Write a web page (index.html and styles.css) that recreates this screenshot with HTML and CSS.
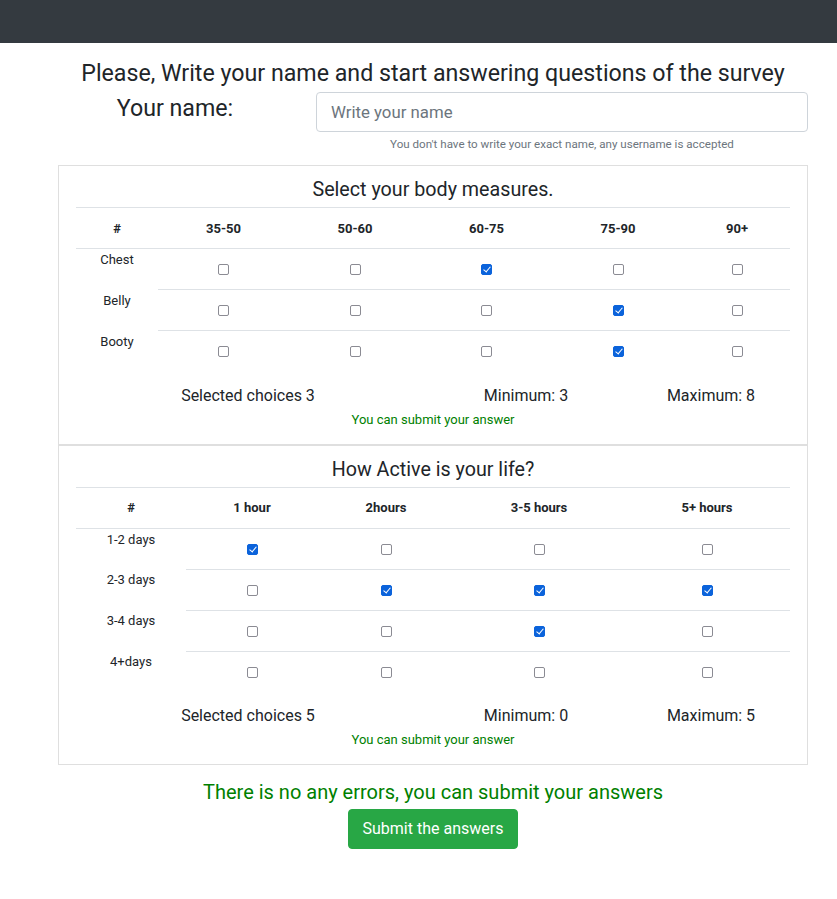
FILE: index.html
```html
<!DOCTYPE html>
<html lang="en">
<head>
<meta charset="utf-8">
<title>Survey</title>
<link rel="stylesheet" href="styles.css">
</head>
<body>
<nav class="navbar"></nav>
<main class="container">
  <h4 class="page-title">Please, Write your name and start answering questions of the survey</h4>
  <div class="name-row">
    <h4 class="name-label">Your name:</h4>
    <div class="name-field">
      <input class="form-control" type="text" placeholder="Write your name">
      <small class="hint">You don't have to write your exact name, any username is accepted</small>
    </div>
  </div>

  <section class="card">
    <h5 class="card-title">Select your body measures.</h5>
    <table class="grid-table">
      <colgroup><col style="width:82px"><col style="width:131px"><col style="width:132px"><col style="width:131px"><col style="width:132px"><col style="width:106px"></colgroup>
      <thead>
        <tr><th>#</th><th>35-50</th><th>50-60</th><th>60-75</th><th>75-90</th><th>90+</th></tr>
      </thead>
      <tbody>
        <tr><th class="row-label">Chest</th><td><input type="checkbox"></td><td><input type="checkbox"></td><td><input type="checkbox" checked></td><td><input type="checkbox"></td><td><input type="checkbox"></td></tr>
        <tr><th class="row-label">Belly</th><td><input type="checkbox"></td><td><input type="checkbox"></td><td><input type="checkbox"></td><td><input type="checkbox" checked></td><td><input type="checkbox"></td></tr>
        <tr><th class="row-label">Booty</th><td><input type="checkbox"></td><td><input type="checkbox"></td><td><input type="checkbox"></td><td><input type="checkbox" checked></td><td><input type="checkbox"></td></tr>
      </tbody>
    </table>
    <div class="stats">
      <span>Selected choices 3</span>
      <span>Minimum: 3</span>
      <span>Maximum: 8</span>
    </div>
    <p class="ok-small">You can submit your answer</p>
  </section>

  <section class="card">
    <h5 class="card-title">How Active is your life?</h5>
    <table class="grid-table">
      <colgroup><col style="width:110px"><col style="width:132px"><col style="width:136px"><col style="width:170px"><col style="width:166px"></colgroup>
      <thead>
        <tr><th>#</th><th>1 hour</th><th>2hours</th><th>3-5 hours</th><th>5+ hours</th></tr>
      </thead>
      <tbody>
        <tr><th class="row-label">1-2 days</th><td><input type="checkbox" checked></td><td><input type="checkbox"></td><td><input type="checkbox"></td><td><input type="checkbox"></td></tr>
        <tr><th class="row-label">2-3 days</th><td><input type="checkbox"></td><td><input type="checkbox" checked></td><td><input type="checkbox" checked></td><td><input type="checkbox" checked></td></tr>
        <tr><th class="row-label">3-4 days</th><td><input type="checkbox"></td><td><input type="checkbox"></td><td><input type="checkbox" checked></td><td><input type="checkbox"></td></tr>
        <tr><th class="row-label">4+days</th><td><input type="checkbox"></td><td><input type="checkbox"></td><td><input type="checkbox"></td><td><input type="checkbox"></td></tr>
      </tbody>
    </table>
    <div class="stats">
      <span>Selected choices 5</span>
      <span>Minimum: 0</span>
      <span>Maximum: 5</span>
    </div>
    <p class="ok-small">You can submit your answer</p>
  </section>

  <p class="ok-big">There is no any errors, you can submit your answers</p>
  <div class="actions">
    <button class="btn-submit" type="button">Submit the answers</button>
  </div>
</main>
</body>
</html>
```

FILE: styles.css
```css
* { box-sizing: border-box; }

body {
  margin: 0;
  font-family: "Segoe UI", Roboto, "Noto Sans", sans-serif;
  color: #212529;
  background: #fff;
}

.navbar {
  height: 43px;
  background: #343a40;
}

.container {
  width: 750px;
  margin-left: 58px;
}

.page-title {
  margin: 16px 0 0;
  font-size: 23.2px;
  line-height: 28px;
  font-weight: 400;
  text-align: center;
}

.name-row {
  display: grid;
  grid-template-columns: 234px 492px;
  column-gap: 24px;
  margin-top: 5px;
}

.name-label {
  margin: 2px 0 0;
  font-size: 23.2px;
  line-height: 28px;
  font-weight: 400;
  text-align: center;
}

.name-field {
  display: flex;
  flex-direction: column;
  align-items: center;
}

.form-control {
  width: 100%;
  height: 40px;
  padding: 0 14px;
  border: 1px solid #ced4da;
  border-radius: 4px;
  font-family: inherit;
  font-size: 16.8px;
  color: #495057;
  outline: none;
}

.form-control::placeholder { color: #6c757d; }

.hint {
  margin-top: 4px;
  font-size: 11.6px;
  line-height: 16px;
  color: #6c757d;
}

.card {
  border: 1px solid #dfdfdf;
  padding: 12px 17px 14px;
}

.name-row + .card { margin-top: 13px; }

.card-title {
  margin: 0 0 5px;
  font-size: 19.7px;
  line-height: 24px;
  font-weight: 400;
  text-align: center;
}

.grid-table {
  width: 714px;
  border-collapse: collapse;
  table-layout: fixed;
}

.grid-table th,
.grid-table td {
  height: 41px;
  padding: 0;
  text-align: center;
  vertical-align: middle;
  border-top: 1px solid #dee2e6;
}

.grid-table thead th {
  font-size: 13px;
  font-weight: 700;
}

.grid-table .row-label {
  vertical-align: top;
  padding-top: 1px;
  font-size: 13px;
  font-weight: 400;
  line-height: 20px;
  border-top: none;
}

.grid-table tbody tr:first-child .row-label {
  border-top: 1px solid #dee2e6;
}

.grid-table input[type="checkbox"] {
  appearance: none;
  -webkit-appearance: none;
  display: block;
  margin: 1px auto 0;
  width: 11px;
  height: 11px;
  border: 1px solid #8b8b93;
  border-radius: 2px;
  background: #fff;
  position: relative;
}

.grid-table input[type="checkbox"]:checked {
  background: #0b63db;
  border-color: #0b63db;
}

.grid-table input[type="checkbox"]:checked::after {
  content: "";
  position: absolute;
  left: 3px;
  top: 0px;
  width: 3px;
  height: 6px;
  border: solid #fff;
  border-width: 0 1.5px 1.5px 0;
  transform: rotate(40deg);
}

.stats {
  display: grid;
  grid-template-columns: 344px 212px 158px;
  margin-top: 12px;
  font-size: 16px;
  line-height: 24px;
  text-align: center;
}

.ok-small {
  margin: 2px 0 0;
  font-size: 13px;
  line-height: 20px;
  color: #008000;
  text-align: center;
}

.ok-big {
  margin: 15px 0 0;
  font-size: 20px;
  line-height: 24px;
  color: #008000;
  text-align: center;
}

.actions {
  display: flex;
  justify-content: center;
  margin-top: 5px;
}

.btn-submit {
  height: 40px;
  padding: 0 14px;
  border: 1px solid #28a745;
  border-radius: 4px;
  background: #28a745;
  color: #fff;
  font-family: inherit;
  font-size: 16px;
  line-height: 24px;
}
```
